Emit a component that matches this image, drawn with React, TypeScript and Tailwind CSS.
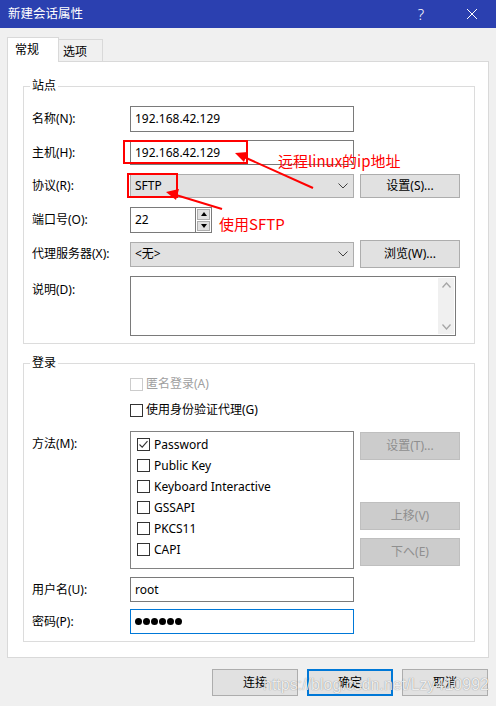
import React from 'react';

const Chevron = () => (
  <svg width="10" height="6" viewBox="0 0 10 6" className="ml-auto mr-[5px]">
    <polyline points="0.5,0.5 5,5 9.5,0.5" fill="none" stroke="#404040" strokeWidth="1" />
  </svg>
);

const Box: React.FC<{ cls: string; children?: React.ReactNode }> = ({ cls, children }) => (
  <div className={`bg-white border flex items-center pl-[4px] ${cls}`}>{children}</div>
);

const Btn: React.FC<{ cls: string; children: React.ReactNode }> = ({ cls, children }) => (
  <div className={`w-[100px] border flex items-center justify-center ${cls}`}>{children}</div>
);

const Check: React.FC<{ checked?: boolean; disabled?: boolean }> = ({ checked, disabled }) => (
  <span
    className={`w-[13px] h-[13px] border bg-white flex items-center justify-center shrink-0 ${
      disabled ? 'border-[#cccccc]' : 'border-[#333333]'
    }`}
  >
    {checked && (
      <svg width="11" height="11" viewBox="0 0 11 11">
        <polyline points="1.5,5.5 4.2,8.2 9.5,2.2" fill="none" stroke="#333" strokeWidth="1.1" />
      </svg>
    )}
  </span>
);

const methods = [
  { name: 'Password', on: true },
  { name: 'Public Key', on: false },
  { name: 'Keyboard Interactive', on: false },
  { name: 'GSSAPI', on: false },
  { name: 'PKCS11', on: false },
  { name: 'CAPI', on: false },
];

export default function App() {
  return (
    <div className="relative w-[496px] h-[706px] bg-[#f0f0f0] flex flex-col text-[12px] text-black font-['Noto_Sans','Noto_Sans_CJK_SC',sans-serif] overflow-hidden">
      {/* title bar */}
      <div className="h-[28px] bg-[#2b40b0] text-white flex items-center pl-[8px] shrink-0">
        <span className="text-[12.5px] leading-none">新建会话属性</span>
        <span className="ml-auto w-[14px] text-center text-[15px] font-light leading-none">?</span>
        <svg width="12" height="12" viewBox="0 0 12 12" className="ml-[38px] mr-[18px]">
          <line x1="1" y1="1" x2="11" y2="11" stroke="white" strokeWidth="1" />
          <line x1="11" y1="1" x2="1" y2="11" stroke="white" strokeWidth="1" />
        </svg>
      </div>

      {/* tabs */}
      <div className="pt-[9px] px-[7px] shrink-0">
        <div className="flex items-end h-[25px]">
          <div className="w-[52px] h-[25px] bg-white border-t border-l border-r border-[#d9d9d9] pl-[7px] pt-[3px]">常规</div>
          <div className="w-[44px] h-[23px] bg-[#f0f0f0] border border-l-0 border-[#d9d9d9] pl-[4px] pt-[3px]">选项</div>
          <div className="flex-1 border-b border-[#d9d9d9]"></div>
        </div>

        <div className="h-[596px] bg-white border-l border-r border-b border-[#d9d9d9] pl-[15px] overflow-hidden">
          {/* 站点 */}
          <div className="w-[452px] mt-[24px] border border-[#dcdcdc] pl-[8px] pb-[7px]">
            <span className="block w-fit -mt-[9px] -ml-[2px] px-[2px] bg-white leading-[16px]">站点</span>
            <div className="flex items-center h-[26px] mt-[12px]">
              <span className="w-[98px]">名称(N):</span>
              <Box cls="w-[224px] h-[26px] border-[#7a7a7a]">192.168.42.129</Box>
            </div>
            <div className="flex items-center h-[25px] mt-[8px]">
              <span className="w-[98px]">主机(H):</span>
              <Box cls="w-[224px] h-[25px] border-[#7a7a7a]">192.168.42.129</Box>
            </div>
            <div className="flex items-center h-[24px] mt-[9px]">
              <span className="w-[98px]">协议(R):</span>
              <div className="w-[224px] h-[24px] bg-[#e1e1e1] border border-[#adadad] flex items-center pl-[4px]">
                SFTP
                <Chevron />
              </div>
              <Btn cls="ml-[6px] h-[24px] bg-[#e1e1e1] border-[#adadad]">设置(S)...</Btn>
            </div>
            <div className="flex items-center h-[26px] mt-[9px]">
              <span className="w-[98px]">端口号(O):</span>
              <Box cls="w-[65px] h-[26px] border-[#7a7a7a] border-r-0">22</Box>
              <div className="w-[17px] h-[26px] bg-white border border-[#7a7a7a] flex flex-col p-[1px] gap-[1px]">
                <div className="flex-1 bg-[#e1e1e1] border border-[#adadad] flex items-center justify-center">
                  <svg width="6" height="4" viewBox="0 0 6 4"><polygon points="3,0 6,4 0,4" fill="#000" /></svg>
                </div>
                <div className="flex-1 bg-[#e1e1e1] border border-[#adadad] flex items-center justify-center">
                  <svg width="6" height="4" viewBox="0 0 6 4"><polygon points="0,0 6,0 3,4" fill="#000" /></svg>
                </div>
              </div>
            </div>
            <div className="flex items-center h-[28px] mt-[7px]">
              <span className="w-[98px]">代理服务器(X):</span>
              <div className="w-[224px] h-[25px] bg-[#e1e1e1] border border-[#adadad] flex items-center pl-[4px]">
                &lt;无&gt;
                <Chevron />
              </div>
              <Btn cls="ml-[6px] h-[28px] bg-[#e1e1e1] border-[#adadad]">浏览(W)...</Btn>
            </div>
            <div className="flex items-start h-[60px] mt-[8px]">
              <span className="w-[98px] pt-[5px]">说明(D):</span>
              <div className="w-[326px] h-[60px] bg-white border border-[#7a7a7a] flex justify-end pr-[1px] py-[1px]">
                <div className="w-[16px] bg-[#f0f0f0] flex flex-col items-center justify-between py-[4px]">
                  <svg width="9" height="6" viewBox="0 0 9 6"><polyline points="0.5,5.5 4.5,1 8.5,5.5" fill="none" stroke="#a6a6a6" strokeWidth="1.3" /></svg>
                  <svg width="9" height="6" viewBox="0 0 9 6"><polyline points="0.5,0.5 4.5,5 8.5,0.5" fill="none" stroke="#a6a6a6" strokeWidth="1.3" /></svg>
                </div>
              </div>
            </div>
          </div>

          {/* 登录 */}
          <div className="w-[452px] mt-[19px] border border-[#dcdcdc] pl-[8px] pb-[7px]">
            <span className="block w-fit -mt-[9px] -ml-[2px] px-[2px] bg-white leading-[16px]">登录</span>
            <div className="flex items-center h-[16px] mt-[5px] pl-[98px] gap-[3px] text-[#a0a0a0]">
              <Check disabled />
              <span>匿名登录(A)</span>
            </div>
            <div className="flex items-center h-[16px] mt-[10px] pl-[98px] gap-[3px]">
              <Check />
              <span>使用身份验证代理(G)</span>
            </div>
            <div className="flex items-start mt-[13px]">
              <span className="w-[98px] pt-[4px]">方法(M):</span>
              <div className="w-[224px] h-[138px] bg-white border border-[#828282] pt-[2px] pl-[6px]">
                {methods.map((m) => (
                  <div key={m.name} className="h-[21px] flex items-center gap-[4px]">
                    <Check checked={m.on} />
                    <span>{m.name}</span>
                  </div>
                ))}
              </div>
              <div className="ml-[6px] flex flex-col text-[#8f8f8f]">
                <Btn cls="mt-[1px] h-[28px] bg-[#cccccc] border-[#bfbfbf]">设置(T)...</Btn>
                <Btn cls="mt-[42px] h-[28px] bg-[#cccccc] border-[#bfbfbf]">上移(V)</Btn>
                <Btn cls="mt-[8px] h-[28px] bg-[#cccccc] border-[#bfbfbf]">下へ(E)</Btn>
              </div>
            </div>
            <div className="flex items-center h-[25px] mt-[8px]">
              <span className="w-[98px]">用户名(U):</span>
              <Box cls="w-[224px] h-[25px] border-[#7a7a7a]">root</Box>
            </div>
            <div className="flex items-center h-[25px] mt-[7px]">
              <span className="w-[98px]">密码(P):</span>
              <Box cls="w-[224px] h-[25px] border-[#0078d7] gap-[1px]">
                {[0, 1, 2, 3, 4, 5].map((i) => (
                  <span key={i} className="w-[7px] h-[7px] rounded-full bg-black" />
                ))}
              </Box>
            </div>
          </div>
        </div>
      </div>

      {/* bottom buttons */}
      <div className="flex justify-end gap-[9px] pr-[8px] mt-[11px] shrink-0">
        <div className="w-[86px] h-[27px] bg-[#e1e1e1] border border-[#adadad] flex items-center justify-center">连接</div>
        <div className="w-[86px] h-[27px] bg-[#e1e1e1] border-2 border-[#0078d7] flex items-center justify-center">确定</div>
        <div className="w-[86px] h-[27px] bg-[#e1e1e1] border border-[#adadad] flex items-center justify-center">取消</div>
      </div>

      {/* watermark */}
      <span className="absolute left-[263px] top-[675px] text-[16px] leading-[20px] font-['Liberation_Sans',sans-serif] text-white/85 [text-shadow:0_0_1px_rgba(0,0,0,0.5)] pointer-events-none">
        https://blog.csdn.net/Lzy410992
      </span>

      {/* red annotations */}
      <svg width="496" height="706" className="absolute left-0 top-0 pointer-events-none">
        <rect x="124" y="141" width="123" height="22" fill="none" stroke="#ff0000" strokeWidth="2" />
        <rect x="128" y="174" width="49" height="23" fill="none" stroke="#ff0000" strokeWidth="2" />
        <line x1="313" y1="188" x2="244" y2="157" stroke="#ff0000" strokeWidth="2" />
        <polygon points="235,153 248,152 244,162" fill="#ff0000" />
        <line x1="222" y1="209" x2="176" y2="195" stroke="#ff0000" strokeWidth="2" />
        <polygon points="166,192 179,189 176,200" fill="#ff0000" />
      </svg>
      <span className="absolute left-[278px] top-[151px] text-[15px] leading-[20px] text-[#ff0000] font-['Noto_Sans_CJK_SC',sans-serif] pointer-events-none">
        远程linux的ip地址
      </span>
      <span className="absolute left-[219px] top-[214px] text-[15px] leading-[20px] text-[#ff0000] font-['Noto_Sans_CJK_SC',sans-serif] pointer-events-none">
        使用SFTP
      </span>
    </div>
  );
}
